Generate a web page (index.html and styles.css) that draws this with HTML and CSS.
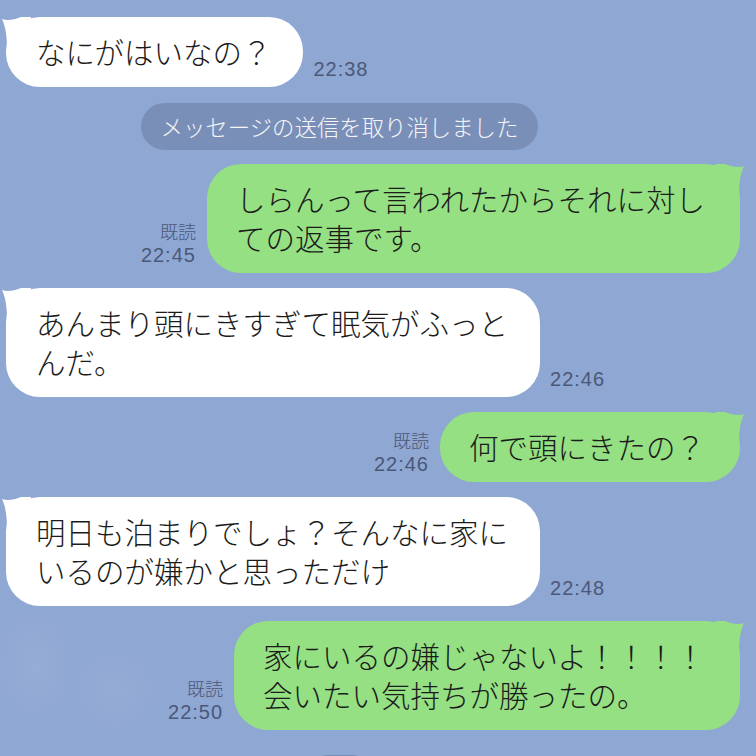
FILE: index.html
```html
<!DOCTYPE html>
<html lang="ja">
<head>
<meta charset="utf-8">
<title>LINE</title>
<link rel="stylesheet" href="styles.css">
</head>
<body>
<div class="chat">
  <div class="row in">
    <div class="bubble white">
      <svg class="tail tail-l" viewBox="0 0 30 30" width="30" height="30"><path d="M1 2 C6 4 13 3 20 0 L30 0 L30 30 L6 30 C6 22 5 10 1 2 Z"/></svg>
      なにがはいなの？
    </div>
    <div class="meta"><span class="time">22:38</span></div>
  </div>

  <div class="row sys">
    <div class="pill">メッセージの送信を取り消しました</div>
  </div>

  <div class="row out">
    <div class="meta"><span class="read">既読</span><span class="time">22:45</span></div>
    <div class="bubble green">
      <svg class="tail tail-r" viewBox="0 0 30 30" width="30" height="30"><path d="M29 2 C24 4 17 3 10 0 L0 0 L0 30 L24 30 C24 22 25 10 29 2 Z"/></svg>
      しらんって言われたからそれに対し<br>ての返事です。
    </div>
  </div>

  <div class="row in">
    <div class="bubble white">
      <svg class="tail tail-l" viewBox="0 0 30 30" width="30" height="30"><path d="M1 2 C6 4 13 3 20 0 L30 0 L30 30 L6 30 C6 22 5 10 1 2 Z"/></svg>
      あんまり頭にきすぎて眠気がふっと<br>んだ。
    </div>
    <div class="meta"><span class="time">22:46</span></div>
  </div>

  <div class="row out">
    <div class="meta"><span class="read">既読</span><span class="time">22:46</span></div>
    <div class="bubble green">
      <svg class="tail tail-r" viewBox="0 0 30 30" width="30" height="30"><path d="M29 2 C24 4 17 3 10 0 L0 0 L0 30 L24 30 C24 22 25 10 29 2 Z"/></svg>
      何で頭にきたの？
    </div>
  </div>

  <div class="row in">
    <div class="bubble white">
      <svg class="tail tail-l" viewBox="0 0 30 30" width="30" height="30"><path d="M1 2 C6 4 13 3 20 0 L30 0 L30 30 L6 30 C6 22 5 10 1 2 Z"/></svg>
      明日も泊まりでしょ？そんなに家に<br>いるのが嫌かと思っただけ
    </div>
    <div class="meta"><span class="time">22:48</span></div>
  </div>

  <div class="row out">
    <div class="meta"><span class="read">既読</span><span class="time">22:50</span></div>
    <div class="bubble green">
      <svg class="tail tail-r" viewBox="0 0 30 30" width="30" height="30"><path d="M29 2 C24 4 17 3 10 0 L0 0 L0 30 L24 30 C24 22 25 10 29 2 Z"/></svg>
      家にいるの嫌じゃないよ！！！！<br>会いたい気持ちが勝ったの。
    </div>
  </div>

  <div class="row sys last">
    <div class="pill small"></div>
  </div>
</div>
</body>
</html>
```

FILE: styles.css
```css
html, body {
  margin: 0;
  padding: 0;
}

body {
  width: 756px;
  height: 756px;
  overflow: hidden;
  background-color: #8fa7d3;
  background-image:
    radial-gradient(ellipse 40px 55px at 35px 665px, rgba(165, 185, 222, 0.3), rgba(165, 185, 222, 0) 100%),
    radial-gradient(ellipse 45px 45px at 115px 690px, rgba(165, 185, 222, 0.25), rgba(165, 185, 222, 0) 100%);
  font-family: "Noto Sans CJK JP", "Noto Sans", sans-serif;
  color: #1b1b1b;
}

.chat {
  display: flex;
  flex-direction: column;
  gap: 15px;
  padding: 17px 16px 0 6px;
}

.row {
  display: flex;
  align-items: flex-end;
  gap: 11px;
}

.row.in {
  gap: 10px;
}

.row.out {
  justify-content: flex-end;
  gap: 11px;
}

.row.sys {
  justify-content: center;
  padding-right: 67px;
  margin: 1px 0 -1px;
}

.row.last {
  margin-top: 10px;
}

.bubble {
  position: relative;
  box-sizing: border-box;
  padding: 15px 32px 16px 30px;
  border-radius: 34px;
  font-size: 29.5px;
  font-weight: 300;
  line-height: 39px;
  white-space: nowrap;
}

.bubble.white {
  background: #ffffff;
}

.bubble.green {
  background: #95e083;
  padding-left: 29px;
  padding-right: 35px;
}

.tail {
  position: absolute;
  top: 0;
  display: block;
}

.white .tail {
  fill: #ffffff;
}

.green .tail {
  fill: #95e083;
}

.tail-l {
  left: -5px;
}

.tail-r {
  right: -5px;
}

.meta {
  display: flex;
  flex-direction: column;
  align-items: flex-end;
  margin-bottom: 6px;
  font-family: "Liberation Sans", "Noto Sans CJK JP", sans-serif;
  color: #4b5878;
  line-height: 24px;
}

.read {
  font-family: "Noto Sans CJK JP", sans-serif;
  font-size: 18px;
  font-weight: 300;
}

.time {
  font-size: 20px;
  letter-spacing: 1px;
}

.pill {
  background: #7a8fb7;
  color: #f3f5f9;
  font-size: 22.4px;
  font-weight: 300;
  line-height: 47px;
  height: 47px;
  padding: 0 20px;
  border-radius: 24px;
  white-space: nowrap;
}

.pill.small {
  width: 56px;
  padding: 0;
  height: 30px;
  border-radius: 15px;
}
```
